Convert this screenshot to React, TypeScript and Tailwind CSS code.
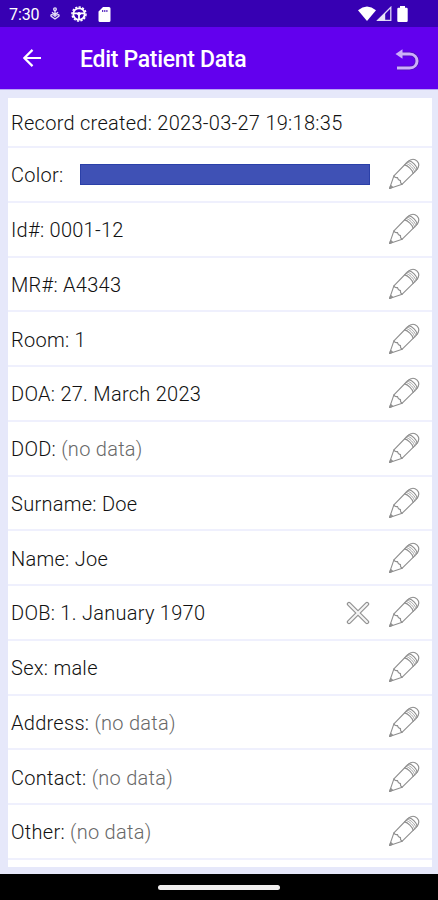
import React from "react";

interface Field {
  label: string;
  value?: string;
  color?: boolean;
  clearable?: boolean;
}

const fields: Field[] = [
  { label: "Color:", color: true },
  { label: "Id#:", value: "0001-12" },
  { label: "MR#:", value: "A4343" },
  { label: "Room:", value: "1" },
  { label: "DOA:", value: "27. March 2023" },
  { label: "DOD:" },
  { label: "Surname:", value: "Doe" },
  { label: "Name:", value: "Joe" },
  { label: "DOB:", value: "1. January 1970", clearable: true },
  { label: "Sex:", value: "male" },
  { label: "Address:" },
  { label: "Contact:" },
  { label: "Other:" },
];

const PencilIcon = () => (
  <svg width="32" height="32" viewBox="0 0 32 32" fill="none" stroke="#8e8e8e" strokeWidth="1.1" strokeLinejoin="round" strokeLinecap="round">
    <path d="M1.6 30.4 L5.9 17.9 L19.4 4 C23 .7 26.6 .7 29.1 3.2 C31.5 5.7 31.3 9 28.2 12.4 L14.2 26.2 Z" />
    <path d="M5.9 17.9 C6.7 19.6 8 19.9 9.5 19.5 C9.8 21.3 10.8 22.4 12.5 22.6 C12.2 24.2 12.8 25.6 14.2 26.2" />
    <path d="M16.6 6.9 C19.8 7.5 24.6 12.2 25.2 15.4 M20.9 2.8 C24.4 3.5 28.5 7.7 29.2 11.2" />
    <path d="M18.1 5.4 C21.3 6 26.1 10.8 26.7 14 M19.4 4.1 C22.7 4.8 27.3 9.3 28 12.6" strokeWidth=".8" />
    <path d="M1.6 30.4 L2.7 27.4 L4.6 29.2 Z" fill="#999" />
  </svg>
);

const ClearIcon = () => (
  <svg width="24" height="24" viewBox="0 0 24 24" fill="none" strokeLinecap="round">
    <path d="M3 3 L21 21 M21 3 L3 21" stroke="#929292" strokeWidth="4.4" />
    <path d="M3 3 L21 21 M21 3 L3 21" stroke="#f6f6f6" strokeWidth="2" />
  </svg>
);

const StatusBar = () => (
  <div className="flex h-[27px] items-center bg-[#3700b3] pb-px pl-[9px] pr-[30px] text-white">
    <span className="w-[40px] pt-[3px] text-[16px] tracking-[-0.1px]">7:30</span>
    <svg className="mt-px" width="12" height="14" viewBox="0 0 12 14" fill="none" stroke="#e3dcf6" strokeWidth="1.4">
      <circle cx="6" cy="2.2" r="1.3" />
      <path d="M6 3.5 V7 M3 5.2 L6 7.8 L9 5.2" />
      <path d="M6 12 L2.2 9.3 C1.2 7.7 3.2 6.5 6 9.2 C8.8 6.5 10.8 7.7 9.8 9.3 Z" />
    </svg>
    <svg className="ml-[10px] mt-px" width="16" height="16" viewBox="0 0 16 16" fill="none" stroke="#fff">
      <circle cx="8" cy="8" r="7" strokeWidth="1.5" strokeDasharray="2.2 1.4" />
      <circle cx="8" cy="8" r="5.7" strokeWidth="1.8" />
      <path d="M2.5 7.4 H13.5 M8 8 V13.5" strokeWidth="1.8" />
      <circle cx="8" cy="8" r="1.4" fill="#fff" />
    </svg>
    <svg className="ml-[11px] mt-[2px]" width="13" height="15" viewBox="0 0 13 15">
      <path fillRule="evenodd" fill="#fff" d="M5 0 H11 Q12.5 0 12.5 1.5 V13.5 Q12.5 15 11 15 H2 Q.5 15 .5 13.5 V4.5 Z M4.2 3 V5 H5.2 V3 Z M6.3 3 V5 H7.3 V3 Z M8.4 3 V5 H9.4 V3 Z" />
    </svg>
    <div className="ml-auto flex items-center pt-px">
      <svg width="18" height="15" viewBox="0 0 18 15" fill="#fff">
        <path d="M0 4.2 Q9 -3.2 18 4.2 L9 15 Z" />
      </svg>
      <svg width="16" height="15" viewBox="0 0 16 15">
        <path d="M1.8 14.3 L14.8 1.3 V14.3 Z" fill="none" stroke="#ddd4f5" strokeWidth="1.3" />
        <path d="M1 14.8 L9.2 6.8 V14.8 Z" fill="#e9e4f8" />
      </svg>
      <svg className="ml-[5px]" width="11" height="16" viewBox="0 0 11 16" fill="#fff">
        <path d="M3 0 H8 V1.7 H9.5 Q10.7 1.7 10.7 3 V14.7 Q10.7 16 9.5 16 H1.5 Q.3 16 .3 14.7 V3 Q.3 1.7 1.5 1.7 H3 Z" />
      </svg>
    </div>
  </div>
);

const AppBar = () => (
  <header className="flex h-[62px] items-center bg-[#6200ee] pl-[23px] pr-[19px] pt-[3px] text-white">
    <svg className="mb-[3px]" width="18" height="18" viewBox="0 0 18 18" fill="none" stroke="#fff" strokeWidth="2.2">
      <path d="M18 9 H1.5 M9.5 .9 L1.4 9 L9.5 17.1" />
    </svg>
    <h1 className="ml-[39px] pt-[2px] text-[23px] font-medium tracking-[-0.3px]">Edit Patient Data</h1>
    <svg className="ml-auto" width="24" height="22" viewBox="0 0 24 22">
      <path d="M6 5 H14.5 C24.5 5 24.5 19 14.5 19 H2" fill="none" stroke="#4d10b5" strokeWidth="4.4" />
      <path d="M6 5 H14.5 C24.5 5 24.5 19 14.5 19 H2" fill="none" stroke="#cdb0fa" strokeWidth="3" />
      <path d="M.5 5 L7.5 .3 V9.7 Z" fill="#cdb0fa" />
    </svg>
  </header>
);

const FieldRow: React.FC<{ field: Field }> = ({ field }) => (
  <div className="flex h-[54.75px] shrink-0 items-center border-b-2 border-[#eff0fd] pl-[3px] pr-[12px]">
    <span className="whitespace-pre pt-[2px]">
      {field.label}{" "}
      {!field.color && (field.value || <span className="text-[#686868]">(no data)</span>)}
    </span>
    {field.color && <div className="ml-[11.5px] mr-[18px] mt-px h-[21px] flex-1 border border-[#2b40a8] bg-[#3f51b5]" />}
    <div className={field.color ? "flex items-center" : "ml-auto flex items-center"}>
      {field.clearable && (
        <button className="mr-[18px] pt-px" aria-label="Clear">
          <ClearIcon />
        </button>
      )}
      <button aria-label="Edit">
        <PencilIcon />
      </button>
    </div>
  </div>
);

const App: React.FC = () => {
  return (
    <div className="flex h-[900px] w-[438px] flex-col overflow-hidden bg-black font-['Roboto',sans-serif]">
      <StatusBar />
      <AppBar />
      <main className="h-[785px] border-t border-[#b9a6f5] bg-[#e6e8fa] pb-[7px] pl-[8px] pr-[6px] pt-[8px]">
        <div className="flex h-full flex-col overflow-hidden bg-white text-[20px] font-light text-[#111] tracking-[0.27px]">
          <div className="flex h-[50px] shrink-0 items-center border-b-2 border-[#eff0fd] pl-[3px] pt-[2px]">
            Record created: 2023-03-27 19:18:35
          </div>
          {fields.map((field) => (
            <FieldRow key={field.label} field={field} />
          ))}
        </div>
      </main>
      <footer className="flex flex-1 items-center justify-center">
        <div className="h-[5px] w-[122px] rounded-full bg-[#f0eeee]" />
      </footer>
    </div>
  );
};

export default App;
